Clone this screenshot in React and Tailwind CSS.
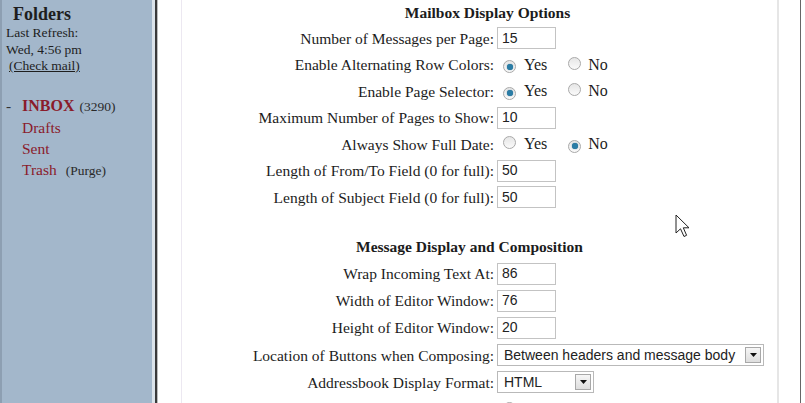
import React from 'react';

const SERIF = { fontFamily: '"Liberation Serif", "Times New Roman", serif' };

function Radio({ checked }) {
  return (
    <span className="inline-flex h-[13px] w-[13px] items-center justify-center rounded-full border border-[#a9a9a9] bg-gradient-to-b from-[#e6e6e6] to-[#fafafa]">
      {checked && <span className="h-[6px] w-[6px] rounded-full bg-[#2b7da6] shadow-[0_0_1px_#1b5d80]" />}
    </span>
  );
}

function TextBox({ value }) {
  return (
    <div className="flex h-[22px] w-[59px] items-center border border-[#c3c3c3] bg-white pl-[4px] text-[14px] text-[#222] font-['Liberation_Sans',Arial,sans-serif]">
      {value}
    </div>
  );
}

function Select({ value, width }) {
  return (
    <div
      className={`flex h-[22px] items-center justify-between border border-[#b9b9b9] bg-white pl-[6px] pr-[2px] text-[14px] text-[#222] font-['Liberation_Sans',Arial,sans-serif] ${width}`}
    >
      <span>{value}</span>
      <span className="flex h-[16px] w-[16px] items-center justify-center border border-[#a8a8a8] bg-gradient-to-b from-[#f6f6f6] to-[#dedede]">
        <svg width="7" height="4" viewBox="0 0 7 4">
          <path d="M0 0 L7 0 L3.5 4 Z" fill="#111" />
        </svg>
      </span>
    </div>
  );
}

function YesNo({ yes }) {
  return (
    <div className="flex items-center text-[16px]">
      <span className="ml-[6px]"><Radio checked={yes} /></span>
      <span className="ml-[8px]">Yes</span>
      <span className="ml-[21px]"><Radio checked={!yes} /></span>
      <span className="ml-[7px]">No</span>
    </div>
  );
}

function Row({ label, children, h }) {
  return (
    <div className={`grid grid-cols-[314px_1fr] items-center ${h}`}>
      <div className="whitespace-nowrap pr-[2px] text-right">{label}</div>
      <div className="pl-[1px]">{children}</div>
    </div>
  );
}

function Cursor() {
  return (
    <svg className="absolute left-[675px] top-[214px]" width="16" height="26" viewBox="0 0 16 26">
      <path
        d="M1 1 L1 19 L5.5 14.8 L9 22.5 L11.6 21.3 L8.3 13.8 L14 13.8 Z"
        fill="#fff"
        stroke="#222"
        strokeWidth="1"
        strokeLinejoin="round"
      />
    </svg>
  );
}

export default function App() {
  const r1 = 'h-[26.5px]';
  const r2 = 'h-[27.2px]';
  return (
    <div className="relative flex h-[403px] w-[805px] overflow-hidden bg-white text-[15.5px] text-[#1c1c1c]" style={SERIF}>
      {/* folder list */}
      <div className="w-[152px] shrink-0 border-l-2 border-[#8d9fb2] bg-[#a3b7cb] text-[#1e1e1e]">
        <div className="pl-[11px] pt-[4px] text-[18px] font-bold leading-[21px]">Folders</div>
        <div className="pl-[4px] text-[13.5px] leading-[16.5px]">
          <div>Last Refresh:</div>
          <div>Wed, 4:56 pm</div>
          <div className="pl-[3px]">
            <span className="underline">(Check mail)</span>
          </div>
        </div>
        <div className="mt-[20px] text-[15.5px] leading-[21px] text-[#8a1b2b]">
          <div className="flex items-baseline">
            <span className="w-[20px] pl-[4px] text-[#333]">-</span>
            <span className="text-[16px] font-bold">INBOX</span>
            <span className="ml-[5px] text-[13.5px] text-[#2a2a2a]">(3290)</span>
          </div>
          <div className="pl-[20px]">Drafts</div>
          <div className="pl-[20px]">Sent</div>
          <div className="flex items-baseline pl-[20px]">
            <span>Trash</span>
            <span className="ml-[9px] text-[13.5px] text-[#2a2a2a]">(Purge)</span>
          </div>
        </div>
      </div>

      {/* frame divider */}
      <div className="w-[3px] shrink-0 bg-[#dbe3ea]" />
      <div className="w-[2px] shrink-0 bg-[#3a3a3a]" />
      <div className="w-[1px] shrink-0 bg-[#bdbdbd]" />

      {/* options */}
      <div className="flex flex-1">
        <div className="w-[23px] shrink-0" />
        <div className="w-[598px] shrink-0 border-l border-r-2 border-l-[#ece8f1] border-r-[#e6e6e6]">
          <div className="flex h-[25px] items-center justify-center pl-[16px] text-[15.5px] font-bold">Mailbox Display Options</div>
          <Row label="Number of Messages per Page:" h={r1}><TextBox value="15" /></Row>
          <Row label="Enable Alternating Row Colors:" h={r1}><YesNo yes /></Row>
          <Row label="Enable Page Selector:" h={r1}><YesNo yes /></Row>
          <Row label="Maximum Number of Pages to Show:" h={r1}><TextBox value="10" /></Row>
          <Row label="Always Show Full Date:" h={r1}><YesNo yes={false} /></Row>
          <Row label="Length of From/To Field (0 for full):" h={r1}><TextBox value="50" /></Row>
          <Row label="Length of Subject Field (0 for full):" h={r1}><TextBox value="50" /></Row>

          <div className="mt-[23.5px] flex h-[26px] items-center justify-center pr-[20px] text-[15.5px] font-bold">
            Message Display and Composition
          </div>
          <Row label="Wrap Incoming Text At:" h={r2}><TextBox value="86" /></Row>
          <Row label="Width of Editor Window:" h={r2}><TextBox value="76" /></Row>
          <Row label="Height of Editor Window:" h={r2}><TextBox value="20" /></Row>
          <Row label="Location of Buttons when Composing:" h={r2}>
            <Select value="Between headers and message body" width="w-[267px]" />
          </Row>
          <Row label="Addressbook Display Format:" h={r2}>
            <Select value="HTML" width="w-[97px]" />
          </Row>
          <Row label="Show HTML Version by Default:" h={r2}><YesNo yes={false} /></Row>
        </div>
        <div className="flex-1" />
        <div className="w-[1px] bg-[#666]" />
        <div className="w-[4px]" />
      </div>

      <Cursor />
    </div>
  );
}
